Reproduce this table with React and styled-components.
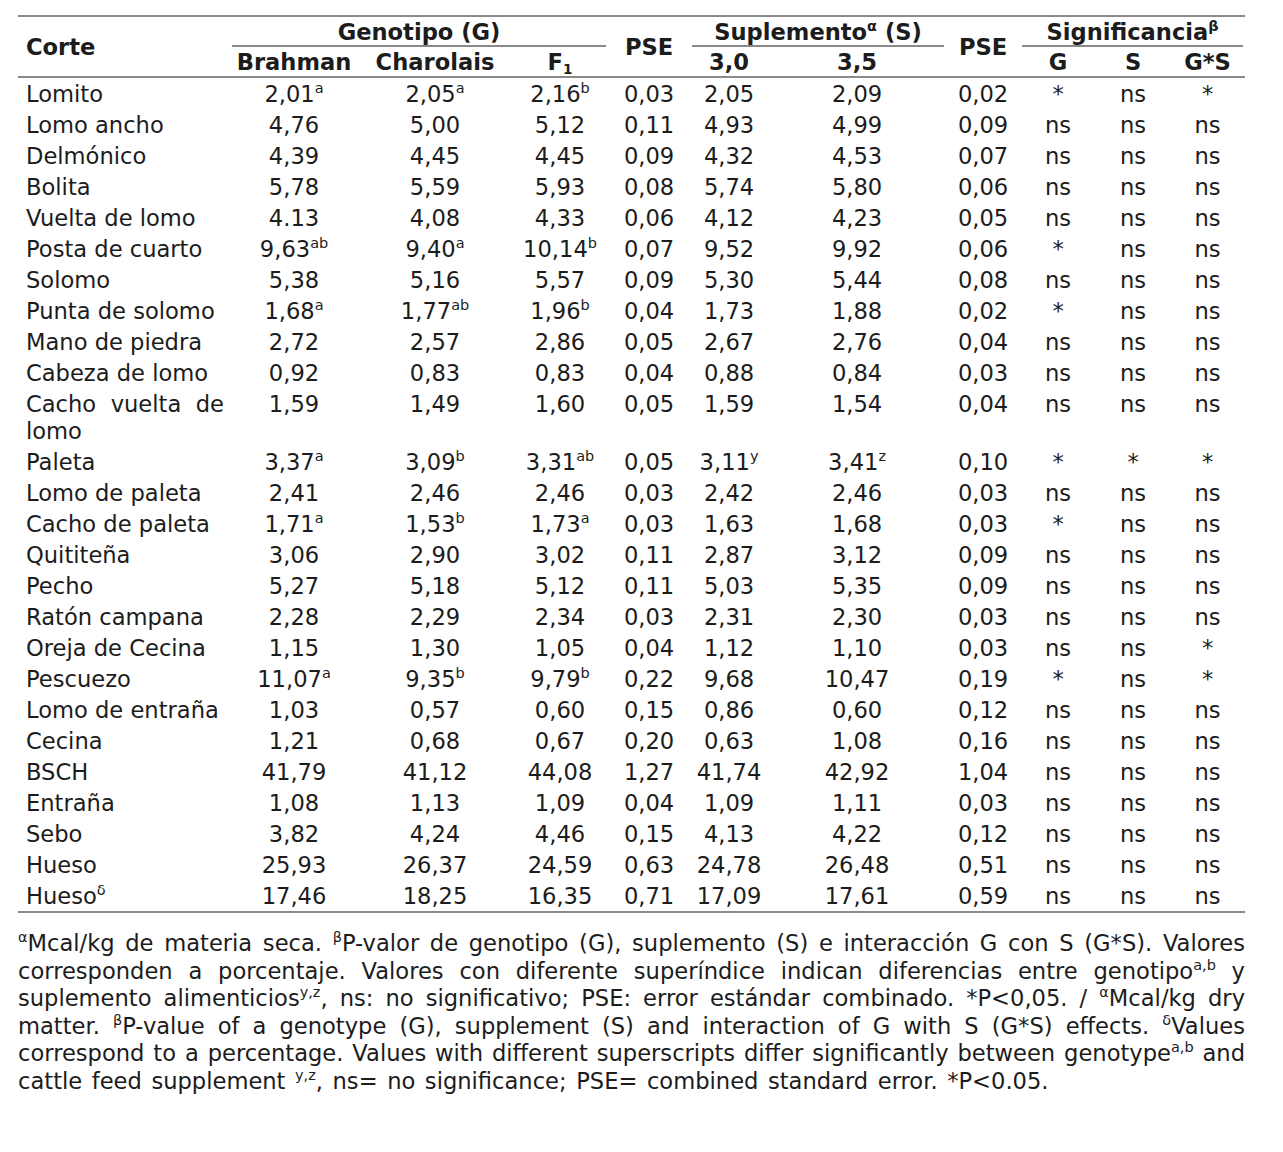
import React from 'react';
import styled, { createGlobalStyle, css } from 'styled-components';

const RULE = '#8a8a8a';

const GlobalStyle = createGlobalStyle`
  body {
    margin: 0;
    background: #ffffff;
  }
`;

const Page = styled.div`
  width: 1227px;
  padding: 15px 0 0 18px;
  font-family: 'DejaVu Sans', Verdana, sans-serif;
  font-size: 22.6px;
  color: #1c1c1c;
`;

const Table = styled.table`
  width: 1227px;
  border-collapse: collapse;
  table-layout: fixed;
  border-top: 2px solid ${RULE};
  border-bottom: 2px solid ${RULE};
`;

const Head = styled.thead`
  border-bottom: 2px solid ${RULE};
`;

const Th = styled.th`
  font-weight: bold;
  line-height: 27px;
  padding: ${(p) => (p.$top ? '2px 0 1px' : '2px 0 0')};
  padding-left: ${(p) => (p.$left ? '8px' : '0')};
  text-align: ${(p) => (p.$left ? 'left' : 'center')};
  vertical-align: middle;
  white-space: nowrap;
  ${(p) =>
    p.$rule &&
    css`
      background: linear-gradient(${RULE}, ${RULE}) center bottom / calc(100% - 4px) 2px no-repeat;
    `}
`;

const Td = styled.td`
  line-height: 27px;
  padding: 3px 0 1px;
  vertical-align: top;
  text-align: center;
  white-space: nowrap;
`;

const NameCell = styled(Td)`
  text-align: justify;
  white-space: normal;
  padding: 3px 6px 1px 8px;
`;

const Sup = styled.sup`
  font-size: 0.64em;
  line-height: 0;
  vertical-align: 0.6em;
`;

const Sub = styled.sub`
  font-size: 0.6em;
  line-height: 0;
  vertical-align: -0.3em;
`;

const Notes = styled.div`
  margin-top: 17px;
  line-height: 27.6px;
`;

const NoteLine = styled.div`
  text-align: justify;
  text-align-last: ${(p) => (p.$last ? 'left' : 'justify')};
  word-spacing: ${(p) => (p.$last ? '2.4px' : '0')};
`;

const widths = [212, 128, 154, 96, 82, 78, 178, 74, 76, 74, 75];

const rows = [
  ['Lomito', '2,01^a', '2,05^a', '2,16^b', '0,03', '2,05', '2,09', '0,02', '*', 'ns', '*'],
  ['Lomo ancho', '4,76', '5,00', '5,12', '0,11', '4,93', '4,99', '0,09', 'ns', 'ns', 'ns'],
  ['Delmónico', '4,39', '4,45', '4,45', '0,09', '4,32', '4,53', '0,07', 'ns', 'ns', 'ns'],
  ['Bolita', '5,78', '5,59', '5,93', '0,08', '5,74', '5,80', '0,06', 'ns', 'ns', 'ns'],
  ['Vuelta de lomo', '4.13', '4,08', '4,33', '0,06', '4,12', '4,23', '0,05', 'ns', 'ns', 'ns'],
  ['Posta de cuarto', '9,63^ab', '9,40^a', '10,14^b', '0,07', '9,52', '9,92', '0,06', '*', 'ns', 'ns'],
  ['Solomo', '5,38', '5,16', '5,57', '0,09', '5,30', '5,44', '0,08', 'ns', 'ns', 'ns'],
  ['Punta de solomo', '1,68^a', '1,77^ab', '1,96^b', '0,04', '1,73', '1,88', '0,02', '*', 'ns', 'ns'],
  ['Mano de piedra', '2,72', '2,57', '2,86', '0,05', '2,67', '2,76', '0,04', 'ns', 'ns', 'ns'],
  ['Cabeza de lomo', '0,92', '0,83', '0,83', '0,04', '0,88', '0,84', '0,03', 'ns', 'ns', 'ns'],
  ['Cacho vuelta de lomo', '1,59', '1,49', '1,60', '0,05', '1,59', '1,54', '0,04', 'ns', 'ns', 'ns'],
  ['Paleta', '3,37^a', '3,09^b', '3,31^ab', '0,05', '3,11^y', '3,41^z', '0,10', '*', '*', '*'],
  ['Lomo de paleta', '2,41', '2,46', '2,46', '0,03', '2,42', '2,46', '0,03', 'ns', 'ns', 'ns'],
  ['Cacho de paleta', '1,71^a', '1,53^b', '1,73^a', '0,03', '1,63', '1,68', '0,03', '*', 'ns', 'ns'],
  ['Quititeña', '3,06', '2,90', '3,02', '0,11', '2,87', '3,12', '0,09', 'ns', 'ns', 'ns'],
  ['Pecho', '5,27', '5,18', '5,12', '0,11', '5,03', '5,35', '0,09', 'ns', 'ns', 'ns'],
  ['Ratón campana', '2,28', '2,29', '2,34', '0,03', '2,31', '2,30', '0,03', 'ns', 'ns', 'ns'],
  ['Oreja de Cecina', '1,15', '1,30', '1,05', '0,04', '1,12', '1,10', '0,03', 'ns', 'ns', '*'],
  ['Pescuezo', '11,07^a', '9,35^b', '9,79^b', '0,22', '9,68', '10,47', '0,19', '*', 'ns', '*'],
  ['Lomo de entraña', '1,03', '0,57', '0,60', '0,15', '0,86', '0,60', '0,12', 'ns', 'ns', 'ns'],
  ['Cecina', '1,21', '0,68', '0,67', '0,20', '0,63', '1,08', '0,16', 'ns', 'ns', 'ns'],
  ['BSCH', '41,79', '41,12', '44,08', '1,27', '41,74', '42,92', '1,04', 'ns', 'ns', 'ns'],
  ['Entraña', '1,08', '1,13', '1,09', '0,04', '1,09', '1,11', '0,03', 'ns', 'ns', 'ns'],
  ['Sebo', '3,82', '4,24', '4,46', '0,15', '4,13', '4,22', '0,12', 'ns', 'ns', 'ns'],
  ['Hueso', '25,93', '26,37', '24,59', '0,63', '24,78', '26,48', '0,51', 'ns', 'ns', 'ns'],
  ['Hueso^δ', '17,46', '18,25', '16,35', '0,71', '17,09', '17,61', '0,59', 'ns', 'ns', 'ns'],
];

// "9,63^ab" -> 9,63 with superscript ab
function Value({ text }) {
  const [main, sup] = text.split('^');
  return (
    <>
      {main}
      {sup && <Sup>{sup}</Sup>}
    </>
  );
}

export default function App() {
  return (
    <Page>
      <GlobalStyle />
      <Table>
        <colgroup>
          {widths.map((w, i) => (
            <col key={i} style={{ width: w }} />
          ))}
        </colgroup>
        <Head>
          <tr>
            <Th rowSpan={2} $left>Corte</Th>
            <Th colSpan={3} $top $rule>Genotipo (G)</Th>
            <Th rowSpan={2}>PSE</Th>
            <Th colSpan={2} $top $rule>
              Suplemento<Sup>α</Sup> (S)
            </Th>
            <Th rowSpan={2}>PSE</Th>
            <Th colSpan={3} $top $rule>
              Significancia<Sup>β</Sup>
            </Th>
          </tr>
          <tr>
            <Th>Brahman</Th>
            <Th>Charolais</Th>
            <Th>
              F<Sub>1</Sub>
            </Th>
            <Th>3,0</Th>
            <Th>3,5</Th>
            <Th>G</Th>
            <Th>S</Th>
            <Th>G*S</Th>
          </tr>
        </Head>
        <tbody>
          {rows.map(([name, ...vals]) => (
            <tr key={name}>
              <NameCell>
                <Value text={name} />
              </NameCell>
              {vals.map((v, i) => (
                <Td key={i}>
                  <Value text={v} />
                </Td>
              ))}
            </tr>
          ))}
        </tbody>
      </Table>
      <Notes>
        <NoteLine>
          <Sup>α</Sup>Mcal/kg de materia seca. <Sup>β</Sup>P-valor de genotipo (G), suplemento (S) e
          interacción G con S (G*S). Valores
        </NoteLine>
        <NoteLine>
          corresponden a porcentaje. Valores con diferente superíndice indican diferencias entre
          genotipo<Sup>a,b</Sup> y
        </NoteLine>
        <NoteLine>
          suplemento alimenticios<Sup>y,z</Sup>, ns: no significativo; PSE: error estándar combinado.
          *P&lt;0,05. / <Sup>α</Sup>Mcal/kg dry
        </NoteLine>
        <NoteLine>
          matter. <Sup>β</Sup>P-value of a genotype (G), supplement (S) and interaction of G with S
          (G*S) effects. <Sup>δ</Sup>Values
        </NoteLine>
        <NoteLine>
          correspond to a percentage. Values with different superscripts differ significantly
          between genotype<Sup>a,b</Sup> and
        </NoteLine>
        <NoteLine $last>
          cattle feed supplement <Sup>y,z</Sup>, ns= no significance; PSE= combined standard error.
          *P&lt;0.05.
        </NoteLine>
      </Notes>
    </Page>
  );
}
